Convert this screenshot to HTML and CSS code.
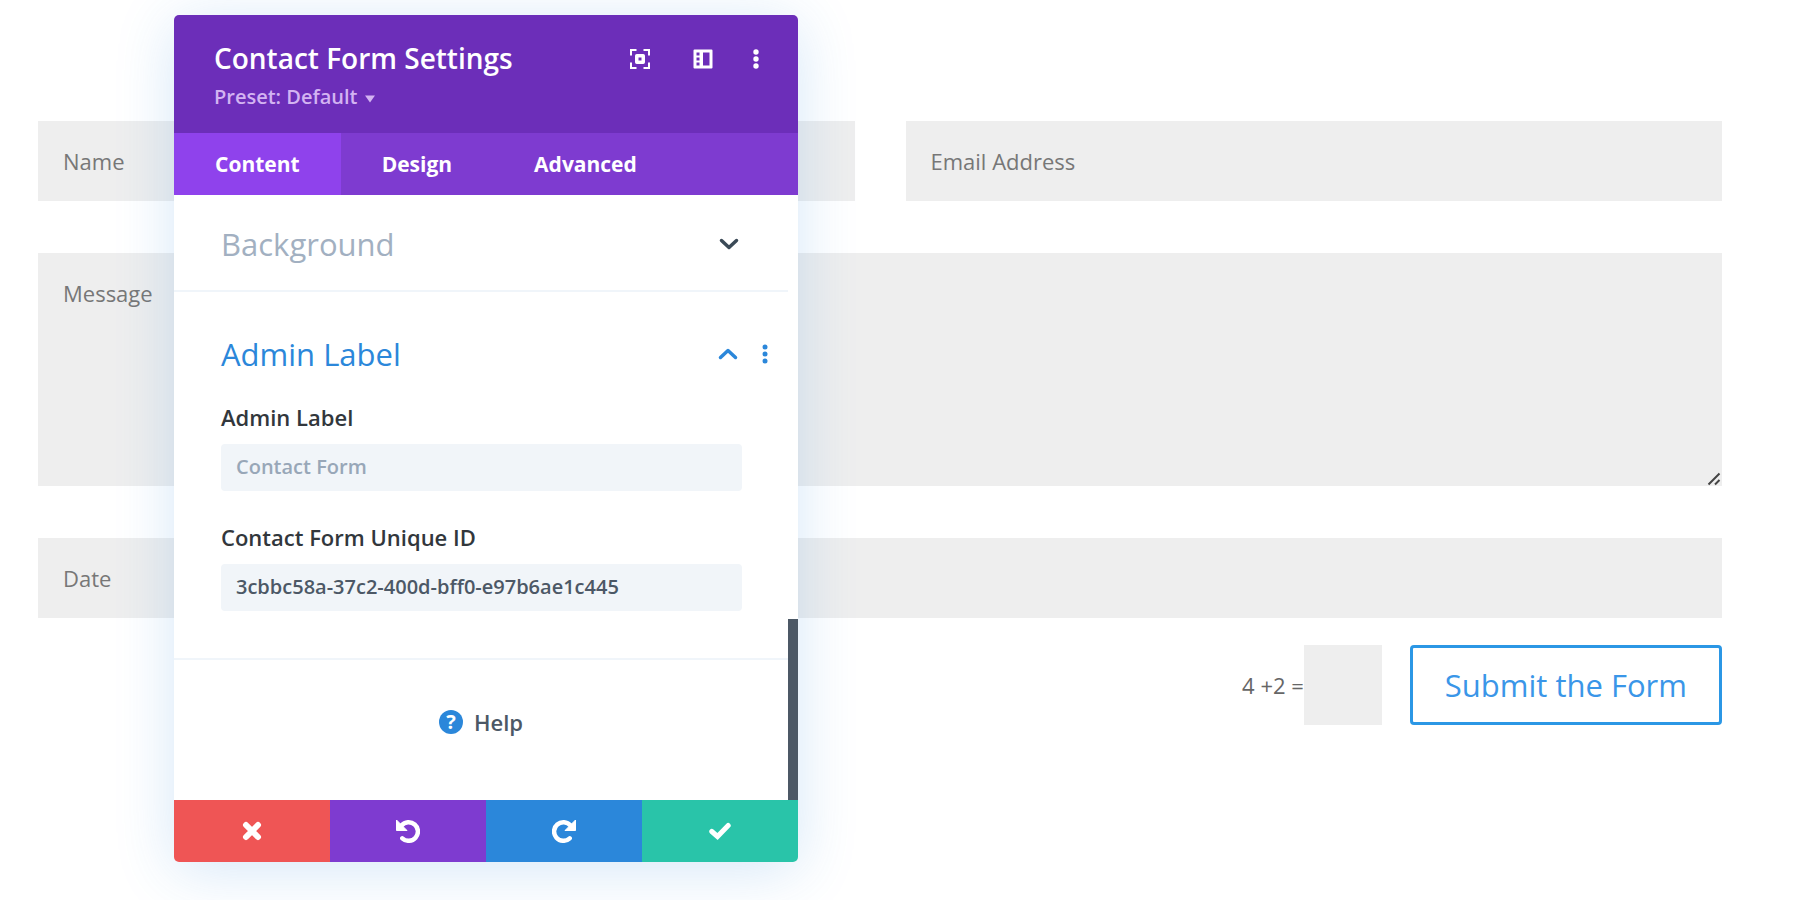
FILE: index.html
```
<!DOCTYPE html>
<html lang="en">
<head>
    <meta charset="UTF-8">
    <meta name="viewport" content="width=device-width, initial-scale=1.0">
    <title>Contact Form Settings</title>
    <link rel="stylesheet" href="styles.css">
</head>
<body>
    <form class="contact-form">
        <div class="form-row">
            <input type="text" class="field" placeholder="Name" aria-label="Name">
            <input type="email" class="field" placeholder="Email Address" aria-label="Email Address">
        </div>
        <div class="message-wrap">
            <textarea class="field message" placeholder="Message" aria-label="Message"></textarea>
            <svg class="resize-handle" viewBox="0 0 14 14" aria-hidden="true">
                <path d="M1.5 12.5L12.5 1.5M8 12.5L12.5 8" fill="none" stroke="#444" stroke-width="2"/>
            </svg>
        </div>
        <input type="text" class="field" placeholder="Date" aria-label="Date">
        <div class="form-bottom">
            <label class="captcha-question" for="captcha">4 +2 =</label>
            <input type="text" id="captcha" class="field captcha">
            <button type="submit" class="submit-btn">Submit the Form</button>
        </div>
    </form>

    <div class="modal">
        <div class="modal-header">
            <div class="modal-heading">
                <h1 class="modal-title">Contact Form Settings</h1>
                <button type="button" class="preset">Preset: Default
                    <svg class="caret" viewBox="0 0 10 8" aria-hidden="true"><path d="M0 0.5h10L5 7.5z" fill="currentColor"/></svg>
                </button>
            </div>
            <div class="header-actions">
                <button type="button" class="icon-btn" aria-label="Expand">
                    <svg width="20" height="20" viewBox="0 0 20 20">
                        <path d="M1 6.5V1h5.5M13.5 1H19v5.5M19 13.5V19h-5.5M6.5 19H1v-5.5" fill="none" stroke="#fff" stroke-width="2"/>
                        <rect x="6.75" y="6.75" width="6.5" height="6.5" fill="none" stroke="#fff" stroke-width="3.5" stroke-linejoin="round"/>
                    </svg>
                </button>
                <button type="button" class="icon-btn" aria-label="Dock">
                    <svg width="20" height="20" viewBox="0 0 20 20">
                        <path fill="#fff" fill-rule="evenodd" d="M1.5 0.5h17a1 1 0 0 1 1 1v17a1 1 0 0 1-1 1h-17a1 1 0 0 1-1-1v-17a1 1 0 0 1 1-1zM10 3.5v13h6.5v-13zM3.5 3.5v3h3v-3zM3.5 8.5v3h3v-3zM3.5 13.5v3h3v-3z"/>
                    </svg>
                </button>
                <button type="button" class="icon-btn more" aria-label="More options">
                    <svg width="6" height="20" viewBox="0 0 6 20" fill="#fff">
                        <circle cx="3" cy="3" r="2.7"/><circle cx="3" cy="10" r="2.7"/><circle cx="3" cy="17" r="2.7"/>
                    </svg>
                </button>
            </div>
        </div>

        <div class="tabs">
            <button type="button" class="tab active">Content</button>
            <button type="button" class="tab">Design</button>
            <button type="button" class="tab">Advanced</button>
        </div>

        <div class="modal-body">
            <div class="modal-content">
                <div class="section closed">
                    <div class="section-head">
                        <h2 class="section-title">Background</h2>
                        <button type="button" class="icon-btn" aria-label="Open Background">
                            <svg width="20" height="12" viewBox="0 0 20 12"><path d="M2.5 2.5L10 9.5l7.5-7" fill="none" stroke="#3b4a57" stroke-width="3.5" stroke-linecap="round" stroke-linejoin="round"/></svg>
                        </button>
                    </div>
                </div>
                <div class="section open">
                    <div class="section-head">
                        <h2 class="section-title">Admin Label</h2>
                        <button type="button" class="icon-btn" aria-label="Close Admin Label">
                            <svg width="20" height="12" viewBox="0 0 20 12"><path d="M2.5 9.5L10 2.5l7.5 7" fill="none" stroke="#2b87da" stroke-width="3.5" stroke-linecap="round" stroke-linejoin="round"/></svg>
                        </button>
                        <button type="button" class="icon-btn" aria-label="Section options">
                            <svg width="6" height="20" viewBox="0 0 6 20" fill="#2b87da">
                                <circle cx="3" cy="3" r="2.5"/><circle cx="3" cy="10" r="2.5"/><circle cx="3" cy="17" r="2.5"/>
                            </svg>
                        </button>
                    </div>
                    <div class="option">
                        <label for="admin-label">Admin Label</label>
                        <input type="text" id="admin-label" placeholder="Contact Form">
                    </div>
                    <div class="option">
                        <label for="unique-id">Contact Form Unique ID</label>
                        <input type="text" id="unique-id" value="3cbbc58a-37c2-400d-bff0-e97b6ae1c445">
                    </div>
                </div>
                <a href="#" class="help"><span class="help-icon">?</span>Help</a>
            </div>
            <div class="scroll-track"><div class="scroll-thumb"></div></div>
        </div>

        <div class="modal-footer">
            <button type="button" class="action discard" aria-label="Discard">
                <svg width="20" height="20" viewBox="0 0 20 20"><path d="M4 4l12 12M16 4L4 16" stroke="#fff" stroke-width="6" stroke-linecap="round"/></svg>
            </button>
            <button type="button" class="action undo" aria-label="Undo">
                <svg width="24" height="24" viewBox="0 0 24 24">
                    <path d="M5.5 6.5A9.3 9.3 0 1 1 6.3 19.3" fill="none" stroke="#fff" stroke-width="4.5" stroke-linecap="round"/>
                    <path d="M0.5 1v10.5H11z" fill="#fff" stroke="#fff" stroke-linejoin="round"/>
                </svg>
            </button>
            <button type="button" class="action redo" aria-label="Redo">
                <svg width="24" height="24" viewBox="0 0 24 24">
                    <path d="M18.5 6.5A9.3 9.3 0 1 0 17.7 19.3" fill="none" stroke="#fff" stroke-width="4.5" stroke-linecap="round"/>
                    <path d="M23.5 1v10.5H13z" fill="#fff" stroke="#fff" stroke-linejoin="round"/>
                </svg>
            </button>
            <button type="button" class="action save" aria-label="Save">
                <svg width="22" height="18" viewBox="0 0 22 18"><path d="M2.8 9.5l5.7 5L19.2 3.5" fill="none" stroke="#fff" stroke-width="5" stroke-linecap="round"/></svg>
            </button>
        </div>
    </div>
</body>
</html>
```
FILE: styles.css
```
* {
    box-sizing: border-box;
}

body {
    margin: 0;
    min-height: 100vh;
    font-family: "Open Sans", "Noto Sans", sans-serif;
    background-color: #fff;
    position: relative;
}

button, input, textarea {
    font-family: inherit;
    margin: 0;
}

button {
    border: none;
    background: none;
    padding: 0;
    cursor: pointer;
}

svg {
    display: block;
}

/* Contact form */
.contact-form {
    display: flex;
    flex-direction: column;
    gap: 52px;
    padding: 121px 78px 0 38px;
}

.form-row {
    display: grid;
    grid-template-columns: 1fr 1fr;
    gap: 51px;
}

.field {
    display: block;
    width: 100%;
    height: 80px;
    padding: 0 25px;
    border: none;
    border-radius: 0;
    background-color: #eee;
    color: #666;
    font-size: 22px;
}

.field::placeholder {
    color: #777;
    opacity: 1;
}

.message-wrap {
    position: relative;
}

.message {
    height: 233px;
    padding: 24px 25px;
    line-height: 32px;
    resize: none;
}

.resize-handle {
    position: absolute;
    right: 1px;
    bottom: 0;
    width: 14px;
    height: 14px;
}

.form-bottom {
    display: flex;
    justify-content: flex-end;
    align-items: center;
    margin-top: -25px;
}

.captcha-question {
    font-size: 22px;
    color: #666;
}

.captcha {
    width: 78px;
    margin-right: 28px;
}

.submit-btn {
    height: 80px;
    padding: 0 32px;
    border: 3px solid #2b97e5;
    border-radius: 4px;
    color: #3a96e8;
    font-size: 31px;
}

/* Settings modal */
.modal {
    position: absolute;
    top: 15px;
    left: 174px;
    width: 624px;
    border-radius: 5px;
    background-color: #fff;
    box-shadow: 0 8px 60px rgba(43, 135, 218, 0.2);
}

.modal-header {
    display: flex;
    justify-content: space-between;
    align-items: flex-start;
    height: 118px;
    padding: 24px 39px 0 40px;
    border-radius: 5px 5px 0 0;
    background-color: #6c2eb9;
}

.modal-title {
    margin: 0;
    color: #fff;
    font-size: 28px;
    font-weight: 600;
    line-height: 38px;
}

.preset {
    display: flex;
    align-items: center;
    gap: 7px;
    color: #d3b3f2;
    font-size: 20px;
    font-weight: 600;
    line-height: 40px;
}

.caret {
    width: 10px;
    height: 8px;
    margin-top: 4px;
}

.header-actions {
    display: flex;
    gap: 43px;
    padding-top: 10px;
}

.more {
    margin-left: -3px;
}

.tabs {
    display: flex;
    height: 62px;
    background-color: #7e3bd0;
}

.tab {
    padding: 0 41px;
    color: #fff;
    font-size: 21px;
    font-weight: 700;
}

.tab.active {
    background-color: #8f42ec;
}

.modal-body {
    display: flex;
}

.modal-content {
    flex: 1;
}

.section {
    padding: 0 20px 0 47px;
    border-bottom: 2px solid #f0f5fa;
}

.section.closed {
    padding: 27px 49px 24px 47px;
}

.section.open {
    padding-top: 40px;
    padding-bottom: 47px;
}

.section-head {
    display: flex;
    align-items: center;
    gap: 24px;
    line-height: 44px;
}

.section-title {
    flex: 1;
    margin: 0;
    color: #a2b0c1;
    font-size: 31px;
    font-weight: 400;
}

.open .section-title {
    color: #2b87da;
}

.option {
    margin-right: 26px;
    padding-top: 22px;
}

.option + .option {
    padding-top: 27px;
}

.option label {
    display: block;
    margin-bottom: 8px;
    color: #32373c;
    font-size: 22px;
    font-weight: 600;
    line-height: 38px;
}

.option input {
    display: block;
    width: 100%;
    height: 47px;
    padding: 0 15px 2px;
    border: none;
    border-radius: 4px;
    background-color: #f1f5f9;
    color: #4c5866;
    font-size: 20px;
    font-weight: 600;
}

.option input::placeholder {
    color: #98a7b8;
    opacity: 1;
}

.help {
    display: flex;
    justify-content: center;
    align-items: center;
    gap: 11px;
    height: 124px;
    margin-bottom: 16px;
    color: #4c5866;
    font-size: 22px;
    font-weight: 600;
    text-decoration: none;
}

.help-icon {
    width: 24px;
    height: 24px;
    border-radius: 50%;
    background-color: #2b87da;
    color: #fff;
    font-size: 20px;
    font-weight: 700;
    line-height: 24px;
    text-align: center;
}

.scroll-track {
    display: flex;
    align-items: flex-end;
    width: 10px;
}

.scroll-thumb {
    width: 100%;
    height: 30%;
    background-color: #4c5866;
}

.modal-footer {
    display: grid;
    grid-template-columns: repeat(4, 1fr);
    height: 62px;
    border-radius: 0 0 5px 5px;
    overflow: hidden;
}

.action {
    display: flex;
    justify-content: center;
    align-items: center;
}

.discard {
    background-color: #ef5555;
}

.undo {
    background-color: #7e3bd0;
}

.redo {
    background-color: #2b87da;
}

.save {
    background-color: #29c4a9;
}
```
